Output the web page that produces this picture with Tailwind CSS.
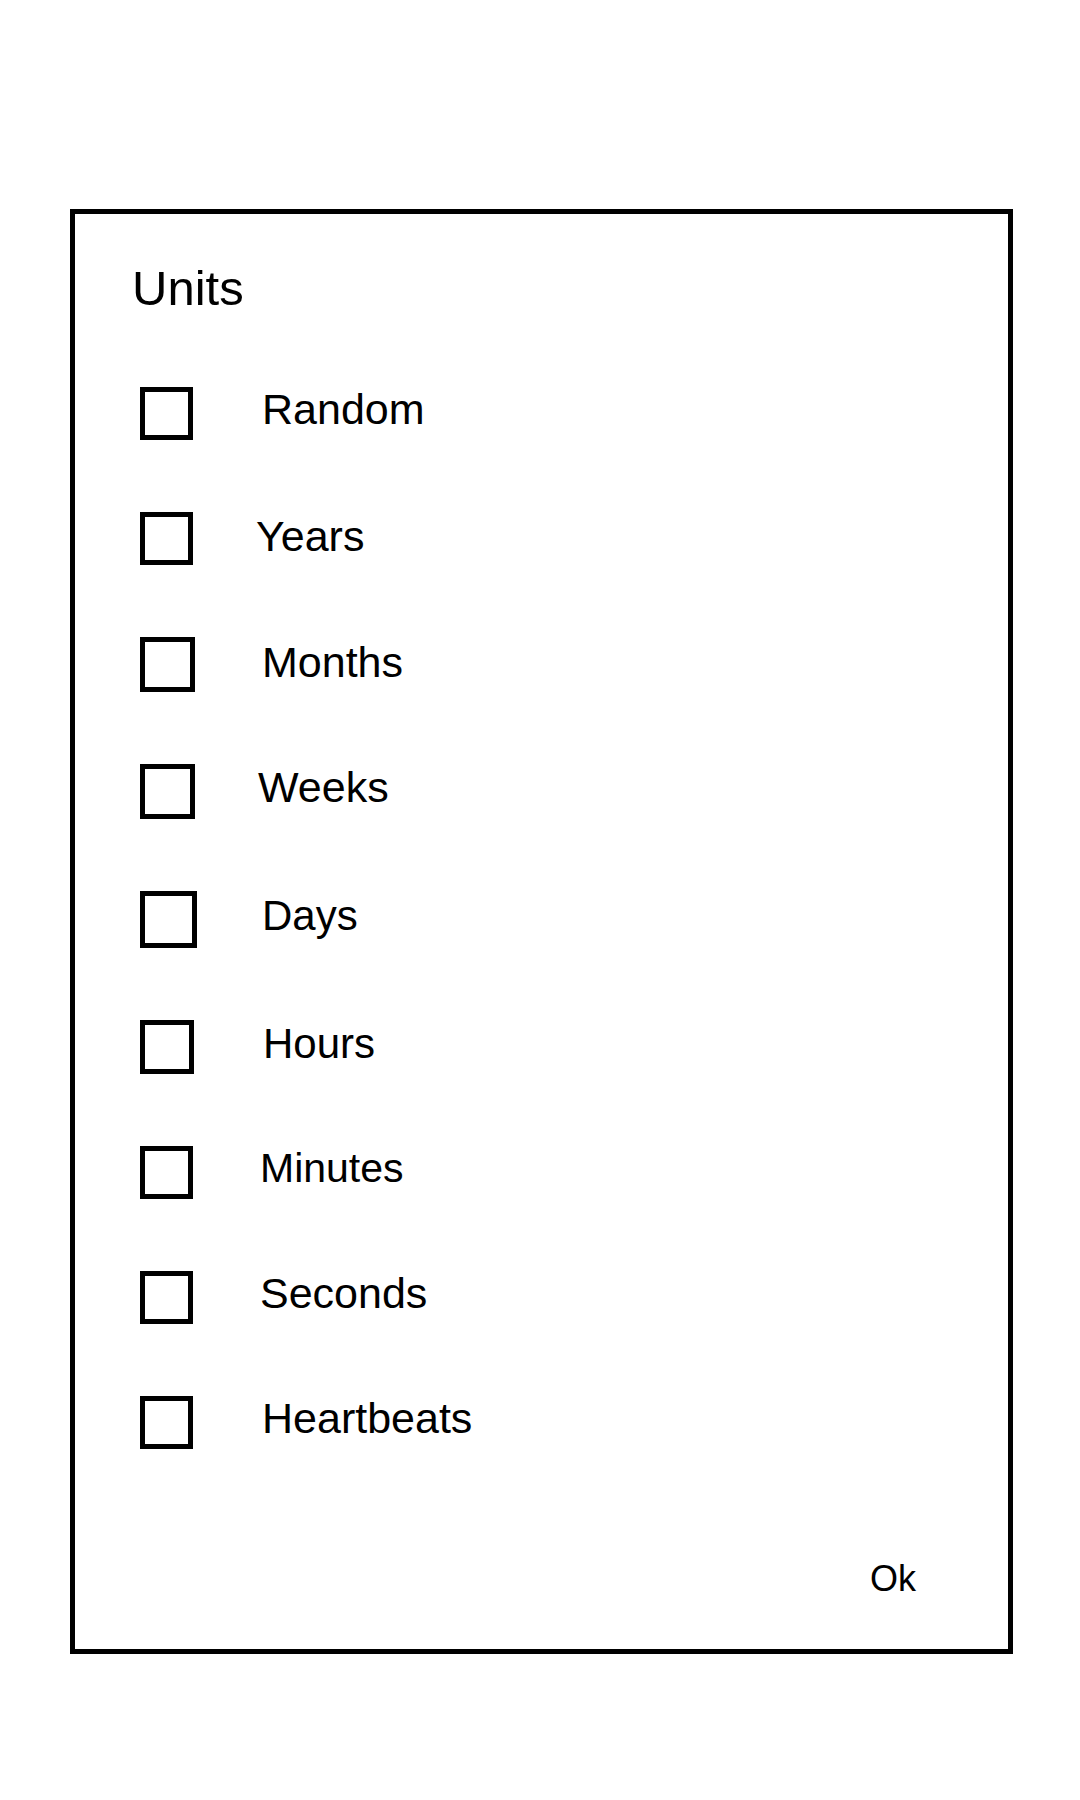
<!DOCTYPE html>
<html lang="en">
<head>
<meta charset="utf-8">
<meta name="viewport" content="width=device-width, initial-scale=1">
<title>Units</title>
<script src="https://cdn.jsdelivr.net/npm/@tailwindcss/browser@4"></script>
</head>
<body class="min-h-screen bg-white pl-[70px] pr-[67px] pt-[209px] pb-36 font-['Liberation_Sans',Arial,sans-serif] text-black">
<form class="w-full border-5 border-black pt-[46px] pl-[57px] pr-[84px] pb-[48px]">
<fieldset>
<legend class="text-[49px] leading-[56px]">Units</legend>
<ul class="mt-[71px] flex flex-col gap-[72px] pl-2 text-[43px] leading-[45px]">
<li class="flex items-center gap-[69px]"><input id="random" type="checkbox" class="size-[53px] appearance-none border-5 border-black checked:bg-black"><label for="random" class="pb-2">Random</label></li>
<li class="flex items-center gap-[63px]"><input id="years" type="checkbox" class="size-[53px] appearance-none border-5 border-black checked:bg-black"><label for="years" class="pb-1">Years</label></li>
<li class="flex items-center gap-[67px]"><input id="months" type="checkbox" class="size-[55px] appearance-none border-5 border-black checked:bg-black"><label for="months" class="pb-1">Months</label></li>
<li class="flex items-center gap-[63px]"><input id="weeks" type="checkbox" class="size-[55px] appearance-none border-5 border-black checked:bg-black"><label for="weeks" class="pb-2">Weeks</label></li>
<li class="flex items-center gap-[65px]"><input id="days" type="checkbox" class="size-[57px] appearance-none border-5 border-black checked:bg-black"><label for="days" class="pb-2 text-[42px]">Days</label></li>
<li class="flex items-center gap-[69px]"><input id="hours" type="checkbox" class="size-[54px] appearance-none border-5 border-black checked:bg-black"><label for="hours" class="pb-2 text-[42px]">Hours</label></li>
<li class="flex items-center gap-[67px]"><input id="minutes" type="checkbox" class="size-[53px] appearance-none border-5 border-black checked:bg-black"><label for="minutes" class="pb-2 text-[41px]">Minutes</label></li>
<li class="flex items-center gap-[67px]"><input id="seconds" type="checkbox" class="size-[53px] appearance-none border-5 border-black checked:bg-black"><label for="seconds" class="pb-2">Seconds</label></li>
<li class="flex items-center gap-[69px]"><input id="heartbeats" type="checkbox" class="size-[53px] appearance-none border-5 border-black checked:bg-black"><label for="heartbeats" class="pb-2">Heartbeats</label></li>
</ul>
</fieldset>
<div class="mt-[108px] flex justify-end"><button type="button" class="px-2 text-[36px] leading-[44px]">Ok</button></div>
</form>
</body>
</html>
